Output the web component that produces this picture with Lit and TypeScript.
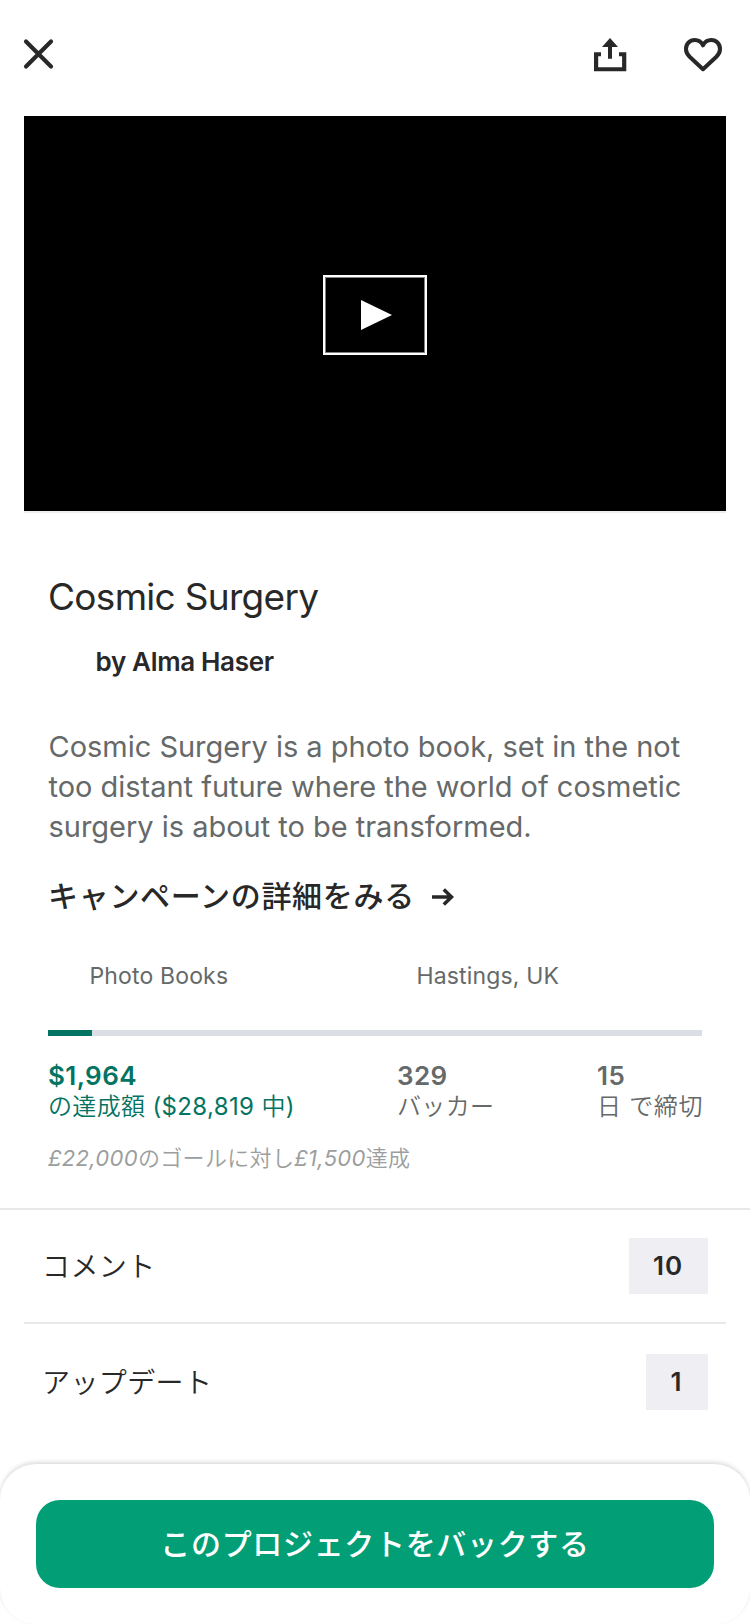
import { LitElement, html, css, svg } from "lit";
import { customElement, property } from "lit/decorators.js";

const closeIcon = svg`<path d="M2 1.500 27 26.500M27 1.500 2 26.500" fill="none" stroke="#282828" stroke-width="4.200" stroke-linecap="round"/>`;
const shareIcon = svg`<path d="M0 14.3h7v4H4.2v10.9h23.9V18.3H25v-4h7.3v19H0z" fill="#282828"/><path d="M16 0l8 8.9h-6V20.7h-4V8.9H8z" fill="#282828"/>`;
const heartIcon = svg`<path d="M19 31.2L5.6 18.7C2.6 15.9 2 13.2 2 11 2 5.7 5.9 2 10.6 2c3.7 0 6.7 1.9 8.4 5.3C20.7 3.9 23.7 2 27.4 2 32.1 2 36 5.7 36 11c0 2.2-.6 4.9-3.6 7.7z" fill="none" stroke="#282828" stroke-width="4" stroke-linejoin="round"/>`;

@customElement("project-stat")
class ProjectStat extends LitElement {
  @property() value = "";
  static styles = css`
    :host { display: block; white-space: nowrap; }
    .value { font-weight: 600; font-size: 26px; line-height: 30px; letter-spacing: 0.4px; }
    .label { margin-top: 1px; font-size: 24px; line-height: 30px; letter-spacing: 0.35px; font-weight: 400; }
  `;
  render() {
    return html`<div class="value">${this.value}</div><div class="label"><slot></slot></div>`;
  }
}

@customElement("detail-row")
class DetailRow extends LitElement {
  @property() label = "";
  @property({ type: Number }) count = 0;
  static styles = css`
    :host { display: flex; align-items: center; justify-content: space-between; padding: 0 42px; }
    .label { font-family: "Noto Sans CJK JP", sans-serif; font-weight: 350; font-size: 28px; line-height: 40px; letter-spacing: 0.4px; padding-bottom: 3px; }
    .count { box-sizing: border-box; min-width: 62px; text-align: center; background: #efeef3; font-size: 26px; font-weight: 600; line-height: 56px; padding: 0 25px 0 24px; letter-spacing: 0.9px; }
  `;
  render() {
    return html`<span class="label">${this.label}</span><span class="count">${this.count}</span>`;
  }
}

@customElement("app-root")
class AppRoot extends LitElement {
  static styles = css`
    :host {
      display: flex; flex-direction: column; box-sizing: border-box;
      width: 750px; height: 1624px; overflow: hidden; background: #fff; color: #282828;
      font-family: Inter, "Noto Sans CJK JP", sans-serif;
    }
    svg { display: block; overflow: visible; }
    .top { display: flex; align-items: flex-start; height: 78px; padding: 38px 28px 0 23.5px; }
    .close { margin-top: 2px; }
    .share { margin-left: auto; margin-right: 58px; }
    .video { display: flex; align-items: center; justify-content: center; height: 395px; margin: 0 24px; background: #000; border-bottom: 2px solid #eee; }
    .play { display: flex; box-sizing: border-box; width: 104px; height: 80px; border: 2px solid #fff; box-shadow: inset 0 0 0 1px #808080; margin-top: 3px; }
    .info { display: flex; flex-direction: column; padding: 61px 48px 0; height: 634px; }
    .title { margin: 0; font-weight: 400; font-size: 37px; line-height: 46px; letter-spacing: -0.7px; }
    .author { margin-top: 26px; padding-left: 47.5px; font-weight: 600; font-size: 26px; line-height: 32px; letter-spacing: -0.33px; }
    .blurb { margin: 49px 0 0 0.5px; font-size: 29px; line-height: 40px; letter-spacing: -0.02px; color: #656969; white-space: nowrap; }
    .more { display: flex; align-items: center; gap: 17px; margin-top: 27px; font-family: "Noto Sans CJK JP", sans-serif; font-weight: 500; font-size: 30px; line-height: 40px; letter-spacing: 0.7px; }
    .arrow { margin-top: 5px; }
    .meta { display: grid; grid-template-columns: 327px 1fr; margin-top: 48px; padding-left: 41.5px; font-size: 23px; line-height: 28px; letter-spacing: 0.15px; color: #656969; }
    .bar { height: 6px; width: 654px; margin-top: 40px; background: #dcdee6; }
    .fill { height: 6px; background: #037362; }
    .stats { display: grid; grid-template-columns: 349px 200px 1fr; margin-top: 25px; color: #656969; }
    .pledged { color: #037362; }
    .days { letter-spacing: 0.7px; }
    .goal { margin-top: 21px; font-size: 22px; line-height: 30px; letter-spacing: 0.33px; color: #9b9e9e; }
    .jp { font-weight: 350; }
    em { font-style: italic; }
    .list { border-top: 2px solid #e8e8e8; }
    .first { height: 112px; }
    .line { height: 2px; margin: 0 24px; background: #e8e8e8; }
    .second { height: 116px; }
    .footer { display: flex; align-items: flex-start; box-sizing: border-box; margin-top: auto; height: 160px; padding: 36px; border-radius: 36px; background: #fff; box-shadow: 0 -2px 4px rgba(0, 0, 0, 0.14); }
    .back { flex: 1; height: 88px; border: 0; padding: 0 0 4px; border-radius: 24px; background: #029e75; color: #fff; font: 500 30px/84px "Noto Sans CJK JP", sans-serif; letter-spacing: 0.67px; }
  `;

  render() {
    const percent = 6.8;
    return html`
      <header class="top">
        <svg class="close" width="29" height="28">${closeIcon}</svg>
        <svg class="share" width="32" height="33">${shareIcon}</svg>
        <svg width="38" height="33">${heartIcon}</svg>
      </header>
      <div class="video">
        <div class="play"><svg width="100" height="76"><path d="M36 23v30l31-15z" fill="#fff"/></svg></div>
      </div>
      <section class="info">
        <h1 class="title">Cosmic Surgery</h1>
        <div class="author">by Alma Haser</div>
        <p class="blurb">Cosmic Surgery is a photo book, set in the not<br />too distant future where the world of cosmetic<br />surgery is about to be transformed.</p>
        <div class="more">
          <span>キャンペーンの詳細をみる</span>
          <svg class="arrow" width="23" height="18"><path d="M0 9h19.500M11.800 1.500 19.500 9l-7.700 7.500" fill="none" stroke="#282828" stroke-width="3.500"/></svg>
        </div>
        <div class="meta"><span>Photo Books</span><span>Hastings, UK</span></div>
        <div class="bar"><div class="fill" style="width:${percent}%"></div></div>
        <div class="stats">
          <project-stat class="pledged" value="$1,964"><span class="jp">の達成額</span> ($28,819 <span class="jp">中</span>)</project-stat>
          <project-stat value="329"><span class="jp">バッカー</span></project-stat>
          <project-stat value="15"><span class="jp days">日 で締切</span></project-stat>
        </div>
        <div class="goal"><em>£22,000</em><span class="jp">のゴールに対し</span><em>£1,500</em><span class="jp">達成</span></div>
      </section>
      <section class="list">
        <detail-row class="first" label="コメント" count="10"></detail-row>
        <div class="line"></div>
        <detail-row class="second" label="アップデート" count="1"></detail-row>
      </section>
      <footer class="footer"><button class="back">このプロジェクトをバックする</button></footer>
    `;
  }
}
